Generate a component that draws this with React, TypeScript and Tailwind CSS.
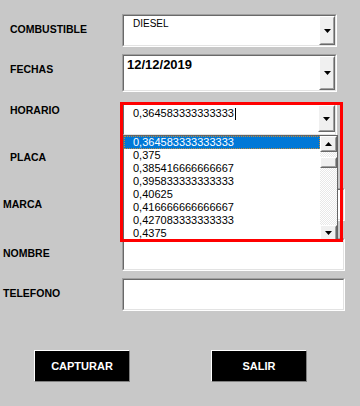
import React from 'react';

const horas = [
  '0,364583333333333',
  '0,375',
  '0,385416666666667',
  '0,395833333333333',
  '0,40625',
  '0,416666666666667',
  '0,427083333333333',
  '0,4375',
];

function Arrow({ up = false }: { up?: boolean }) {
  return (
    <svg width="7" height="4" viewBox="0 0 7 4" className="block">
      {up ? <path d="M3.5 0L7 4H0z" fill="#000" /> : <path d="M0 0h7L3.5 4z" fill="#000" />}
    </svg>
  );
}

// raised 3d button used in combos and scrollbar
function Raised({ className = '', children }: { className?: string; children?: React.ReactNode }) {
  return (
    <div className={`border border-t-white border-l-white border-r-[#696969] border-b-[#696969] ${className}`}>
      <div className="w-full h-full bg-[#f0f0f0] border border-t-[#f0f0f0] border-l-[#f0f0f0] border-r-[#a0a0a0] border-b-[#a0a0a0] flex items-center justify-center">
        {children}
      </div>
    </div>
  );
}

// sunken field frame
function Sunken({ className = '', children }: { className?: string; children?: React.ReactNode }) {
  return (
    <div className={`border border-t-[#a0a0a0] border-l-[#a0a0a0] border-r-white border-b-white ${className}`}>
      <div className="w-full h-full bg-white border border-t-[#696969] border-l-[#696969] border-r-[#e3e3e3] border-b-[#e3e3e3] flex">
        {children}
      </div>
    </div>
  );
}

function Label({ children, className = '' }: { children: React.ReactNode; className?: string }) {
  return (
    <div className={`w-[122px] shrink-0 text-[10.5px] leading-[12px] font-bold text-black ${className}`}>{children}</div>
  );
}

export default function App() {
  return (
    <div className="relative w-[360px] h-[406px] bg-[#c8c8c8] overflow-hidden font-['Liberation_Sans',Arial,sans-serif]">
      <div className="flex flex-col">
        {/* Combustible */}
        <div className="flex mt-[14px] h-[33px]">
          <Label className="pl-[10px] pt-[9px]">COMBUSTIBLE</Label>
          <Sunken className="w-[215px] h-full">
            <div className="flex-1 pl-[9px] pt-[2px] text-[10px] leading-[12px] text-black">DIESEL</div>
            <Raised className="w-[16px] h-full">
              <Arrow />
            </Raised>
          </Sunken>
        </div>

        {/* Fechas */}
        <div className="flex mt-[7px] h-[38px]">
          <Label className="pl-[10px] pt-[9px]">FECHAS</Label>
          <Sunken className="w-[215px] h-full">
            <div className="flex-1 pl-[3px] pt-[1px] text-[13px] leading-[15px] font-bold text-black">12/12/2019</div>
            <Raised className="w-[16px] h-full">
              <Arrow />
            </Raised>
          </Sunken>
        </div>

        {/* Horario */}
        <div className="flex mt-[11px] h-[33px]">
          <Label className="pl-[10px] pt-[1px]">HORARIO</Label>
          <div className="relative">
            <Sunken className="w-[215px] h-[33px]">
              <div className="flex-1 pl-[9px] pt-[2px] text-[11px] leading-[13px] text-black flex items-start">
                <span>0,364583333333333</span>
                <span className="w-px h-[12px] bg-black ml-px mt-px" />
              </div>
              <Raised className="w-[17px] h-[27px]">
                <Arrow />
              </Raised>
            </Sunken>

            {/* open list */}
            <div className="absolute left-[1px] top-[32px] w-[215px] h-[104px] bg-white border border-[#646464] border-b-0 flex overflow-hidden z-10">
              <div className="flex-1 flex flex-col">
                {horas.map((h, i) => (
                  <div
                    key={h}
                    className={
                      i === 0
                        ? 'h-[13px] pl-[8px] text-[11px] leading-[11px] text-white bg-[#0078d7] border border-dotted border-[#c08a3a]'
                        : 'h-[13px] pl-[9px] text-[11px] leading-[13px] text-black'
                    }
                  >
                    {h}
                  </div>
                ))}
              </div>
              <div className="w-[17px] flex flex-col bg-[repeating-conic-gradient(#e8e8e8_0_25%,#ffffff_0_50%)] bg-[length:2px_2px]">
                <Raised className="w-[17px] h-[16px]">
                  <Arrow up />
                </Raised>
                <Raised className="w-[17px] h-[11px] mt-[5px]" />
                <div className="flex-1" />
                <Raised className="w-[17px] h-[16px] mb-[-2px]">
                  <Arrow />
                </Raised>
              </div>
            </div>
          </div>
        </div>

        {/* Placa */}
        <div className="flex mt-[4px] h-[33px]">
          <Label className="pl-[10px] pt-[11px]">PLACA</Label>
          <Sunken className="w-[215px] h-full" />
        </div>

        {/* Marca */}
        <div className="flex mt-[15px] h-[33px]">
          <Label className="pl-[3px] pt-[10px]">MARCA</Label>
          <Sunken className="w-[223px] h-full" />
        </div>

        {/* Nombre */}
        <div className="flex mt-[17px] h-[33px]">
          <Label className="pl-[3px] pt-[9px]">NOMBRE</Label>
          <Sunken className="w-[223px] h-full" />
        </div>

        {/* Telefono */}
        <div className="flex mt-[7px] h-[33px]">
          <Label className="pl-[3px] pt-[9px]">TELEFONO</Label>
          <Sunken className="w-[223px] h-full" />
        </div>

        {/* Botones */}
        <div className="flex mt-[39px] pl-[34px] gap-[81px]">
          <button className="w-[96px] h-[32px] bg-black border border-t-white border-l-white border-r-[#808080] border-b-[#808080] text-white text-[11px] font-bold">
            CAPTURAR
          </button>
          <button className="w-[96px] h-[32px] bg-black border border-t-white border-l-white border-r-[#808080] border-b-[#808080] text-white text-[11px] font-bold">
            SALIR
          </button>
        </div>
      </div>

      {/* red highlight */}
      <div className="absolute left-[120px] top-[102px] w-[223px] h-[140px] border-[3px] border-[#ff0000] z-20 pointer-events-none" />
    </div>
  );
}
